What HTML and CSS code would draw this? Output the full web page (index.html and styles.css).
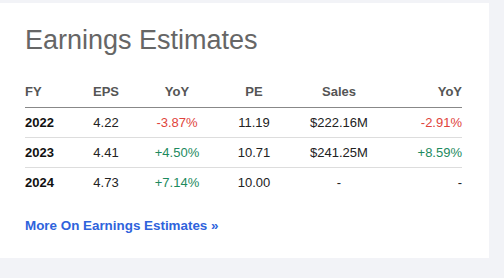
FILE: index.html
```html
<!DOCTYPE html>
<html>
<head>
<meta charset="utf-8">
<link rel="stylesheet" href="styles.css">
<title>Earnings Estimates</title>
</head>
<body>
<div class="card">
  <h2 class="title">Earnings Estimates</h2>
  <table class="estimates">
    <colgroup>
      <col class="c-fy"><col class="c-eps"><col class="c-yoy"><col class="c-pe"><col class="c-sales"><col class="c-yoy2">
    </colgroup>
    <thead>
      <tr><th class="left">FY</th><th class="eps">EPS</th><th>YoY</th><th>PE</th><th>Sales</th><th class="right">YoY</th></tr>
    </thead>
    <tbody>
      <tr><td class="left year">2022</td><td class="eps">4.22</td><td class="neg">-3.87%</td><td>11.19</td><td>$222.16M</td><td class="right neg">-2.91%</td></tr>
      <tr><td class="left year">2023</td><td class="eps">4.41</td><td class="pos">+4.50%</td><td>10.71</td><td>$241.25M</td><td class="right pos">+8.59%</td></tr>
      <tr><td class="left year">2024</td><td class="eps">4.73</td><td class="pos">+7.14%</td><td>10.00</td><td>-</td><td class="right">-</td></tr>
    </tbody>
  </table>
  <a class="more" href="#">More On Earnings Estimates &raquo;</a>
</div>
</body>
</html>
```

FILE: styles.css
```css
body {
    margin: 0;
    background-color: #f2f3f7;
    font-family: "Liberation Sans", Arial, sans-serif;
}
.card {
    background-color: #fff;
    width: 489px;
    height: 255px;
    margin-top: 3px;
    padding: 0 27px 0 25px;
    box-sizing: border-box;
}
.title {
    margin: 0;
    padding-top: 21px;
    font-size: 27px;
    font-weight: normal;
    color: #666;
    line-height: 32px;
}
.estimates {
    width: 437px;
    margin-top: 28px;
    border-collapse: collapse;
    table-layout: fixed;
    font-size: 13px;
}
.c-fy { width: 50px; }
.c-eps { width: 62px; }
.c-yoy { width: 80px; }
.c-pe { width: 74px; }
.c-sales { width: 96px; }
.c-yoy2 { width: 75px; }
th {
    color: #555;
    font-weight: bold;
    text-align: center;
    padding: 0 0 8px 0;
    border-bottom: 1px solid #888;
    line-height: 15px;
}
td {
    color: #222;
    text-align: center;
    padding: 0;
    height: 29px;
    border-bottom: 1px solid #ddd;
}
tbody tr:last-child td {
    border-bottom: none;
}
.left { text-align: left; }
.right { text-align: right; }
.year { font-weight: bold; color: #111; }
.neg { color: #e0443c; }
.pos { color: #1d8a5e; }
.more {
    display: inline-block;
    margin-top: 21px;
    color: #2f63dc;
    font-size: 13.4px;
    font-weight: bold;
    text-decoration: none;
}
```
